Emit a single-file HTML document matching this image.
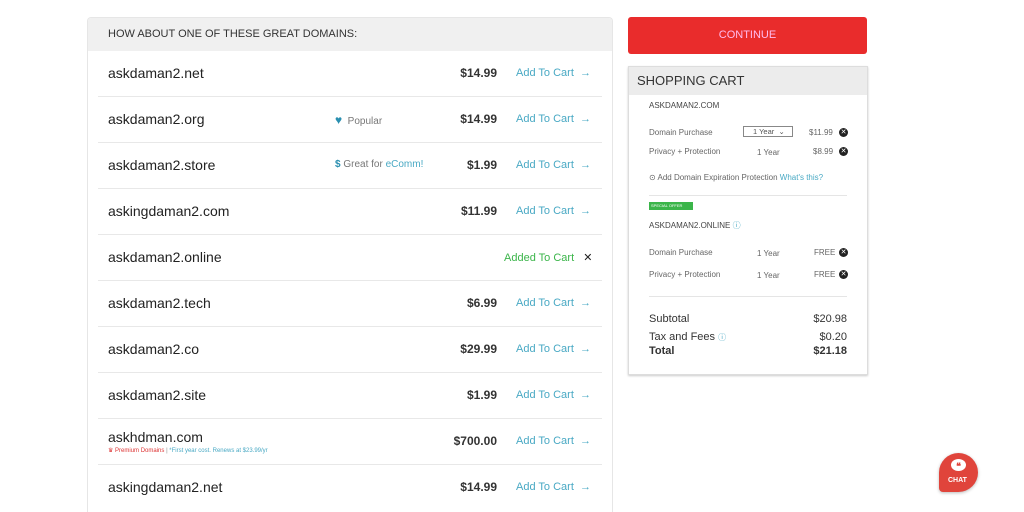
<!DOCTYPE html>
<html><head><meta charset="utf-8"><style>
*{margin:0;padding:0;box-sizing:border-box}
html,body{width:1024px;height:512px;overflow:hidden}
body{background:#fff;font-family:"Liberation Sans",sans-serif;position:relative;color:#333}
.a{position:absolute}
#left{left:87px;top:17px;width:526px;height:495px;border:1px solid #e6e6e6;border-bottom:none;border-radius:4px 4px 0 0;overflow:hidden}
#lh{left:0;top:0;width:526px;height:33px;background:#f0f0f0;font-size:11px;color:#333;padding:10px 0 0 20px}
.row{position:absolute;left:10px;width:504px;height:46px;border-bottom:1px solid #e8e8e8}
.row .d{position:absolute;left:10px;top:14px;font-size:14px;color:#222}
.row .p{position:absolute;right:105px;top:15px;font-size:12px;font-weight:bold;color:#333}
.row .c{position:absolute;left:418px;top:16px;font-size:11px;color:#49a9c4}
.row .t{position:absolute;left:237px;top:16px;font-size:10px;color:#777}
#cont{left:628px;top:17px;width:239px;height:37px;background:#e92c2c;border-radius:3px;color:#fbe;font-size:11px;text-align:center;line-height:37px}
#cart{left:628px;top:66px;width:240px;height:309px;border:1px solid #ddd;box-shadow:0 1px 2px #ccc}
#ch{left:0;top:0;width:238px;height:28px;background:#ececec;font-size:13px;padding:6px 0 0 8px;color:#333}
.s{font-size:8px;color:#666;position:absolute}
.x{position:absolute;width:9px;height:9px;border-radius:50%;background:#222;color:#fff;font-size:7px;line-height:9px;text-align:center}
.b{position:absolute;font-size:11px;color:#333}
</style></head><body>
<div id="left" class="a">
<div id="lh" class="a">HOW ABOUT ONE OF THESE GREAT DOMAINS:</div>
<div class="row" style="top:33px"><span class="d">askdaman2.net</span><span class="p">$14.99</span><span class="c">Add To Cart &nbsp;→</span></div>
<div class="row" style="top:79px"><span class="d">askdaman2.org</span><span class="t"><span style="color:#2a8fb0;font-size:12px">♥</span> &nbsp;Popular</span><span class="p">$14.99</span><span class="c">Add To Cart &nbsp;→</span></div>
<div class="row" style="top:125px"><span class="d">askdaman2.store</span><span class="t"><b style="color:#2a8fb0">$</b> Great for <span style="color:#49a9c4">eComm!</span></span><span class="p">$1.99</span><span class="c">Add To Cart &nbsp;→</span></div>
<div class="row" style="top:171px"><span class="d">askingdaman2.com</span><span class="p">$11.99</span><span class="c">Add To Cart &nbsp;→</span></div>
<div class="row" style="top:217px"><span class="d">askdaman2.online</span><span class="c" style="left:406px;color:#3bb54a">Added To Cart &nbsp;&nbsp;<span style="color:#222">✕</span></span></div>
<div class="row" style="top:263px"><span class="d">askdaman2.tech</span><span class="p">$6.99</span><span class="c">Add To Cart &nbsp;→</span></div>
<div class="row" style="top:309px"><span class="d">askdaman2.co</span><span class="p">$29.99</span><span class="c">Add To Cart &nbsp;→</span></div>
<div class="row" style="top:355px"><span class="d">askdaman2.site</span><span class="p">$1.99</span><span class="c">Add To Cart &nbsp;→</span></div>
<div class="row" style="top:401px"><span class="d" style="top:10px">askhdman.com</span><span class="a" style="left:10px;top:28px;font-size:6px;color:#d33">♛ Premium Domains <span style="color:#888">|</span> <span style="color:#49a9c4">*First year cost. Renews at $23.99/yr</span></span><span class="p">$700.00</span><span class="c">Add To Cart &nbsp;→</span></div>
<div class="row" style="top:447px;border:none"><span class="d">askingdaman2.net</span><span class="p">$14.99</span><span class="c">Add To Cart &nbsp;→</span></div>
</div>
<div id="cont" class="a">CONTINUE</div>
<div id="cart" class="a">
<div id="ch" class="a">SHOPPING CART</div>
<div class="s" style="left:20px;top:34px;color:#444">ASKDAMAN2.COM</div>
<div class="s" style="left:20px;top:61px">Domain Purchase</div>
<div class="a" style="left:114px;top:59px;width:50px;height:11px;border:1px solid #888;font-size:7.5px;padding-left:9px;color:#555">1 Year &nbsp;⌄</div>
<div class="s" style="left:180px;top:61px">$11.99</div><div class="x" style="left:210px;top:61px">✕</div>
<div class="s" style="left:20px;top:80px">Privacy + Protection</div>
<div class="s" style="left:128px;top:81px">1 Year</div>
<div class="s" style="left:184px;top:80px">$8.99</div><div class="x" style="left:210px;top:80px">✕</div>
<div class="s" style="left:20px;top:106px">⊙ Add Domain Expiration Protection <span style="color:#49a9c4">What's this?</span></div>
<div class="a" style="left:20px;top:128px;width:198px;border-top:1px solid #e5e5e5"></div>
<div class="a" style="left:20px;top:135px;width:44px;height:8px;background:#3bb54a;color:#fff;font-size:4px;line-height:8px;padding-left:2px">SPECIAL OFFER</div>
<div class="s" style="left:20px;top:153px;color:#444">ASKDAMAN2.ONLINE <span style="color:#49a9c4">ⓘ</span></div>
<div class="s" style="left:20px;top:181px">Domain Purchase</div>
<div class="s" style="left:128px;top:182px">1 Year</div>
<div class="s" style="left:185px;top:181px">FREE</div><div class="x" style="left:210px;top:181px">✕</div>
<div class="s" style="left:20px;top:203px">Privacy + Protection</div>
<div class="s" style="left:128px;top:204px">1 Year</div>
<div class="s" style="left:185px;top:203px">FREE</div><div class="x" style="left:210px;top:203px">✕</div>
<div class="a" style="left:20px;top:229px;width:198px;border-top:1px solid #e5e5e5"></div>
<div class="b" style="left:20px;top:246px">Subtotal</div><div class="b" style="right:20px;top:246px">$20.98</div>
<div class="b" style="left:20px;top:264px">Tax and Fees <span style="color:#49a9c4;font-size:8px">ⓘ</span></div><div class="b" style="right:20px;top:264px">$0.20</div>
<div class="b" style="left:20px;top:278px;font-weight:bold">Total</div><div class="b" style="right:20px;top:278px;font-weight:bold">$21.18</div>
</div>
<div class="a" style="left:939px;top:453px;width:39px;height:39px;border-radius:50% 50% 50% 4px;background:#e0443b;box-shadow:0 1px 3px #bbb"></div>
<div class="a" style="left:951px;top:459px;width:15px;height:12px;border-radius:50%;background:#fff;color:#e0443b;font-size:9px;text-align:center;line-height:14px;font-weight:bold">❝</div>
<div class="a" style="left:948px;top:477px;font-size:7px;font-weight:bold;color:#fff">CHAT</div>
</body></html>
